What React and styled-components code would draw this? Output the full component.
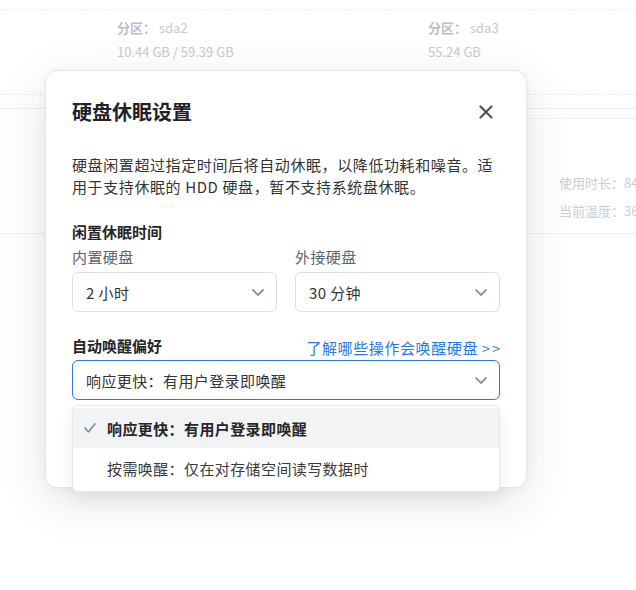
import React from "react";
import styled, { createGlobalStyle } from "styled-components";

const GlobalStyle = createGlobalStyle`
  html, body { margin: 0; padding: 0; background: #ffffff; }
  body { font-family: "Noto Sans CJK SC", "Noto Sans", sans-serif; }
  * { box-sizing: border-box; }
`;

const Page = styled.div`
  position: relative;
  width: 636px;
  height: 590px;
  overflow: hidden;
  background: #ffffff;
  padding-top: 9px;
`;

const Rule = styled.div`
  height: 0;
  border-top: 1px ${(p) => (p.$dashed ? "dashed" : "solid")} ${(p) => p.$color || "#eceef2"};
  margin-top: ${(p) => p.$top || 0}px;
  margin-left: ${(p) => p.$indent || 0}px;
`;

const PartitionRow = styled.div`
  display: grid;
  grid-template-columns: 311px auto;
  padding: 6px 0 0 117px;
  height: 84px;
`;

const Partition = styled.div`
  font-size: 13px;
  line-height: 24px;
  color: #c6cad1;
  white-space: nowrap;
`;

const PartLabel = styled.span`
  font-weight: 700;
  color: #babfc7;
`;

const StatsBlock = styled.div`
  padding: 50px 0 0 559px;
  height: 114px;
`;

const Stat = styled.div`
  font-size: 13px;
  line-height: 28px;
  color: #c9cdd3;
  white-space: nowrap;
`;

const Modal = styled.div`
  position: absolute;
  left: 45px;
  top: 70px;
  width: 482px;
  height: 418px;
  background: #ffffff;
  border: 1px solid #e3e5e9;
  border-radius: 12px;
  box-shadow: 0 12px 48px rgba(20, 30, 50, 0.12), 0 2px 8px rgba(20, 30, 50, 0.04);
  padding: 28px 26px 0 26px;
`;

const Header = styled.div`
  display: flex;
  align-items: center;
  justify-content: space-between;
  height: 26px;
`;

const Title = styled.h2`
  margin: 0;
  font-size: 20px;
  line-height: 26px;
  font-weight: 700;
  color: #1f2329;
`;

const CloseButton = styled.button`
  display: flex;
  align-items: center;
  justify-content: center;
  width: 20px;
  height: 20px;
  margin-right: 4px;
  padding: 0;
  border: none;
  background: transparent;
  cursor: pointer;
`;

const Description = styled.p`
  margin: 29px 0 0 0;
  font-size: 15px;
  line-height: 22px;
  letter-spacing: 0.6px;
  color: #333333;
`;

const SectionTitle = styled.div`
  font-size: 15px;
  line-height: 22px;
  font-weight: 700;
  color: #262626;
  white-space: nowrap;
`;

const Section = styled.div`
  margin-top: ${(p) => p.$top}px;
`;

const FieldGrid = styled.div`
  display: grid;
  grid-template-columns: 1fr 1fr;
  column-gap: 18px;
  margin-top: 3px;
`;

const Field = styled.div`
  display: flex;
  flex-direction: column;
  gap: 4px;
`;

const FieldLabel = styled.div`
  font-size: 15px;
  line-height: 22px;
  letter-spacing: 0.4px;
  color: #5b6270;
`;

const SelectBox = styled.div`
  display: flex;
  align-items: center;
  justify-content: space-between;
  height: 40px;
  padding: 0 12px 0 13px;
  border: 1px solid ${(p) => (p.$active ? "#2b78e4" : "#dcdfe6")};
  border-radius: 6px;
  font-size: 15px;
  letter-spacing: 0.4px;
  color: #333333;
  background: #ffffff;
`;

const SectionHeader = styled.div`
  display: flex;
  align-items: center;
  justify-content: space-between;
  height: 22px;
  margin-bottom: 3px;
`;

const HelpLink = styled.a`
  font-size: 15px;
  line-height: 22px;
  letter-spacing: 0.6px;
  color: #2a76e2;
  text-decoration: none;
  margin-top: 4px;
  white-space: nowrap;
`;

const Arrows = styled.span`
  font-size: 14px;
  letter-spacing: 2.5px;
  margin-right: -2.5px;
`;

const SelectWrap = styled.div`
  position: relative;
`;

const Menu = styled.div`
  position: absolute;
  left: 0;
  right: 0;
  top: calc(100% + 5px);
  background: #ffffff;
  border: 1px solid #e4e7ed;
  border-radius: 6px;
  box-shadow: 0 6px 16px rgba(20, 30, 50, 0.08);
  padding: 2px 0 3px 0;
  z-index: 2;
`;

const Option = styled.div`
  display: flex;
  align-items: center;
  gap: 11px;
  height: 40px;
  padding-left: 11px;
  font-size: 15px;
  letter-spacing: 0.4px;
  font-weight: ${(p) => (p.$selected ? 700 : 400)};
  color: ${(p) => (p.$selected ? "#262626" : "#3a3a3a")};
  background: ${(p) => (p.$selected ? "#f2f3f5" : "transparent")};
`;

const CheckSlot = styled.span`
  display: flex;
  width: 12px;
  justify-content: center;
`;

const Chevron = () => (
  <svg width="12" height="7" viewBox="0 0 12 7" fill="none">
    <polyline points="1,1 6,6 11,1" stroke="#8a94a5" strokeWidth="1.8" strokeLinecap="round" strokeLinejoin="round" />
  </svg>
);

const Check = () => (
  <svg width="12" height="10" viewBox="0 0 12 10" fill="none">
    <polyline points="1,5.2 4.4,8.8 11,1" stroke="#8796ab" strokeWidth="1.9" strokeLinecap="round" strokeLinejoin="round" />
  </svg>
);

const CloseIcon = () => (
  <svg width="14" height="14" viewBox="0 0 14 14" fill="none">
    <path d="M1.5 1.5 L12.5 12.5 M12.5 1.5 L1.5 12.5" stroke="#4a5363" strokeWidth="2.2" strokeLinecap="round" />
  </svg>
);

const options = [
  { label: "响应更快：有用户登录即唤醒", selected: true },
  { label: "按需唤醒：仅在对存储空间读写数据时", selected: false },
];

export default function App() {
  return (
    <>
      <GlobalStyle />
      <Page>
        <Rule $dashed $color="#eceef1" />
        <PartitionRow>
          <Partition>
            <div><PartLabel>分区：</PartLabel> sda2</div>
            <div>10.44 GB / 59.39 GB</div>
          </Partition>
          <Partition>
            <div><PartLabel>分区：</PartLabel> sda3</div>
            <div>55.24 GB</div>
          </Partition>
        </PartitionRow>
        <Rule $dashed $color="#e8eaee" />
        <Rule $top={13} $color="#eef0f3" />
        <Rule $top={9} $indent={60} $color="#f1f2f5" />
        <StatsBlock>
          <Stat>使用时长：84</Stat>
          <Stat>当前温度：36</Stat>
        </StatsBlock>
        <Rule $color="#eef0f3" />

        <Modal>
          <Header>
            <Title>硬盘休眠设置</Title>
            <CloseButton aria-label="关闭"><CloseIcon /></CloseButton>
          </Header>
          <Description>
            硬盘闲置超过指定时间后将自动休眠，以降低功耗和噪音。适用于支持休眠的 HDD 硬盘，暂不支持系统盘休眠。
          </Description>

          <Section $top={23}>
            <SectionTitle>闲置休眠时间</SectionTitle>
            <FieldGrid>
              <Field>
                <FieldLabel>内置硬盘</FieldLabel>
                <SelectBox>2 小时<Chevron /></SelectBox>
              </Field>
              <Field>
                <FieldLabel>外接硬盘</FieldLabel>
                <SelectBox>30 分钟<Chevron /></SelectBox>
              </Field>
            </FieldGrid>
          </Section>

          <Section $top={23}>
            <SectionHeader>
              <SectionTitle>自动唤醒偏好</SectionTitle>
              <HelpLink href="#">了解哪些操作会唤醒硬盘 <Arrows>&gt;&gt;</Arrows></HelpLink>
            </SectionHeader>
            <SelectWrap>
              <SelectBox $active>响应更快：有用户登录即唤醒<Chevron /></SelectBox>
              <Menu>
                {options.map((o) => (
                  <Option key={o.label} $selected={o.selected}>
                    <CheckSlot>{o.selected && <Check />}</CheckSlot>
                    {o.label}
                  </Option>
                ))}
              </Menu>
            </SelectWrap>
          </Section>
        </Modal>
      </Page>
    </>
  );
}
